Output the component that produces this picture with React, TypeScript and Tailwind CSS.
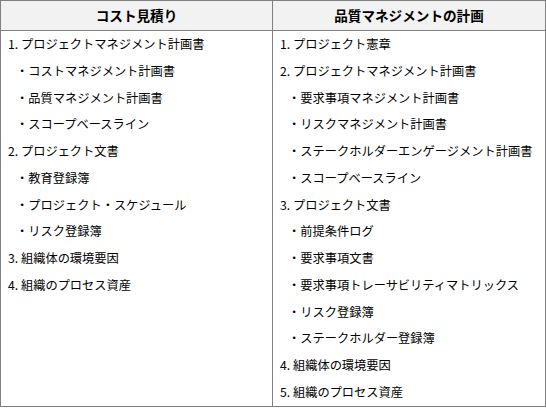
import React from "react";

type Item = { t: string; sub?: boolean };

const left: Item[] = [
  { t: "1. プロジェクトマネジメント計画書" },
  { t: "・コストマネジメント計画書", sub: true },
  { t: "・品質マネジメント計画書", sub: true },
  { t: "・スコープベースライン", sub: true },
  { t: "2. プロジェクト文書" },
  { t: "・教育登録簿", sub: true },
  { t: "・プロジェクト・スケジュール", sub: true },
  { t: "・リスク登録簿", sub: true },
  { t: "3. 組織体の環境要因" },
  { t: "4. 組織のプロセス資産" },
];

const right: Item[] = [
  { t: "1. プロジェクト憲章" },
  { t: "2. プロジェクトマネジメント計画書" },
  { t: "・要求事項マネジメント計画書", sub: true },
  { t: "・リスクマネジメント計画書", sub: true },
  { t: "・ステークホルダーエンゲージメント計画書", sub: true },
  { t: "・スコープベースライン", sub: true },
  { t: "3. プロジェクト文書" },
  { t: "・前提条件ログ", sub: true },
  { t: "・要求事項文書", sub: true },
  { t: "・要求事項トレーサビリティマトリックス", sub: true },
  { t: "・リスク登録簿", sub: true },
  { t: "・ステークホルダー登録簿", sub: true },
  { t: "4. 組織体の環境要因" },
  { t: "5. 組織のプロセス資産" },
];

function Col({ items }: { items: Item[] }) {
  return (
    <div className="flex flex-col pl-[7px]">
      {items.map((it, i) => (
        <div
          key={i}
          className={`h-[26.77px] leading-[26.77px] whitespace-nowrap ${it.sub ? "pl-[8px]" : ""}`}
        >
          {it.t}
        </div>
      ))}
    </div>
  );
}

export default function App() {
  return (
    <div
      className="w-[546px] h-[409px] bg-white text-black"
      style={{ fontFamily: '"Noto Sans CJK JP", "Noto Sans", sans-serif' }}
    >
      <div className="w-[546px] h-[407px] border border-[#808080] grid grid-cols-[272px_272px] grid-rows-[30px_1fr]">
        <div className="border-r border-b border-[#808080] bg-[#f2f2f2] flex items-center justify-center font-bold text-[13.6px]">
          コスト見積り
        </div>
        <div className="border-b border-[#808080] bg-[#f2f2f2] flex items-center justify-center font-bold text-[13.6px]">
          品質マネジメントの計画
        </div>
        <div className="border-r border-[#808080] text-[12.24px]">
          <Col items={left} />
        </div>
        <div className="text-[12.24px]">
          <Col items={right} />
        </div>
      </div>
    </div>
  );
}
